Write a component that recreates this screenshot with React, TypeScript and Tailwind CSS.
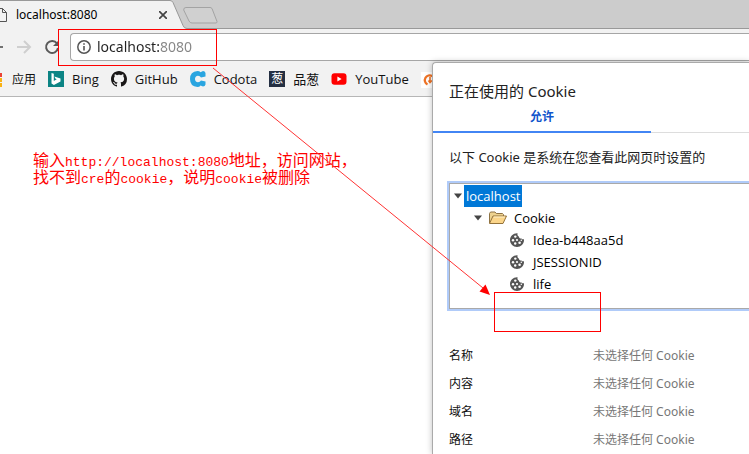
import React from "react";

const uiFont = "font-['Noto_Sans','Noto_Sans_CJK_SC',sans-serif]";

function BingIcon() {
  return (
    <svg className="size-4" viewBox="0 0 16 16" aria-hidden="true">
      <rect width="16" height="16" fill="#0c8484" />
      <path d="M3.5 2 5.8 2.8V10l2.9-1.7-1.4-.7-.9-2.2 6.1 2.1v2.9L5.9 14l-2.4-1.6z" fill="#fff" />
    </svg>
  );
}

function GitHubIcon() {
  return (
    <svg className="size-4" viewBox="0 0 16 16" aria-hidden="true">
      <path
        fill="#191717"
        d="M8 0C3.58 0 0 3.58 0 8c0 3.54 2.29 6.53 5.47 7.59.4.07.55-.17.55-.38 0-.19-.01-.82-.01-1.49-2.01.37-2.53-.49-2.69-.94-.09-.23-.48-.94-.82-1.13-.28-.15-.68-.52-.01-.53.63-.01 1.08.58 1.23.82.72 1.21 1.87.87 2.33.66.07-.52.28-.87.51-1.07-1.78-.2-3.64-.89-3.64-3.95 0-.87.31-1.59.82-2.15-.08-.2-.36-1.02.08-2.12 0 0 .67-.21 2.2.82.64-.18 1.32-.27 2-.27s1.36.09 2 .27c1.53-1.04 2.2-.82 2.2-.82.44 1.1.16 1.92.08 2.12.51.56.82 1.27.82 2.15 0 3.07-1.87 3.75-3.65 3.95.29.25.54.73.54 1.48 0 1.07-.01 1.93-.01 2.2 0 .21.15.46.55.38A8.01 8.01 0 0 0 16 8c0-4.42-3.58-8-8-8z"
      />
    </svg>
  );
}

function CodotaIcon() {
  return (
    <svg className="size-4" viewBox="0 0 16 16" aria-hidden="true">
      <path
        d="M7.500 0Q9.500 0 10.500 1.200L13 0q2 0 2.500 2v3.500L11 6.500Q10 4.800 8 4.800 5 5 5 8t3 3.200q2 0 3-1.700l4.500 1v3q-.5 2-2.500 2l-2.500-1Q9.500 16 7.500 16 0 15.500 0 8T7.500 0z"
        fill="#2aa5e0"
      />
    </svg>
  );
}

function OnionIcon() {
  return (
    <span className="flex size-4 items-center justify-center bg-[#242f42] text-xs leading-4 text-white">葱</span>
  );
}

function YouTubeIcon() {
  return (
    <svg className="size-4" viewBox="0 0 16 16" aria-hidden="true">
      <rect x="0.5" y="2.2" width="15" height="11.6" rx="3" fill="#f00" />
      <path d="M6.4 5.5v5L10.6 8z" fill="#fff" />
    </svg>
  );
}

function OrangeIcon() {
  return (
    <svg className="size-4" viewBox="0 0 16 16" fill="none" aria-hidden="true">
      <rect width="16" height="16" fill="#fff" />
      <path d="M6.500 12.500A4.800 4.800 0 1 1 12.500 11" stroke="#ee7326" strokeWidth="2.2" />
      <path d="M9 5v5M7.500 8.500l1.500 2 2-2" stroke="#ee7326" strokeWidth="1.6" />
    </svg>
  );
}

function CookieIcon() {
  return (
    <svg className="size-4" viewBox="0 0 16 16" aria-hidden="true">
      <path
        fill="#555"
        d="M8 1.200C4.100 1.200 1 4.300 1 8s3.100 7 7 7 7-3.100 7-6.700c0-.4 0-.7-.1-1.100-.9.300-1.900 0-2.400-.8-1.400.2-2.600-.7-2.700-2-1.100-.5-1.700-1.700-1.200-3.200z"
      />
      <g fill="#fff">
        <circle cx="6.300" cy="4.600" r="1.200" />
        <circle cx="4" cy="8.200" r="1.200" />
        <circle cx="8" cy="8" r="1.100" />
        <circle cx="6.200" cy="11.500" r="1.200" />
        <circle cx="10.600" cy="10.800" r="1.300" />
        <circle cx="12.300" cy="8.300" r="0.800" />
      </g>
    </svg>
  );
}

function FolderIcon() {
  return (
    <svg className="h-4 w-5" viewBox="0 0 20 16" aria-hidden="true">
      <path d="M1.500 13V3.500l1-1.500h4.500l1.300 1.500h6.200l1 1V6" fill="#eed28f" stroke="#8e7345" />
      <path d="M1.500 13.500 5 6h13.500L15 13.500z" fill="#fbd58a" stroke="#94733b" strokeLinejoin="round" />
      <path d="M5.700 7h11.200" stroke="#fff1c9" />
    </svg>
  );
}

function Caret() {
  return (
    <svg className="h-2 w-2" viewBox="0 0 8 8" aria-hidden="true">
      <path d="M0 1.500h8L4 6.500z" fill="#444" />
    </svg>
  );
}

const bookmarks = [
  { name: "Bing", icon: <BingIcon /> },
  { name: "GitHub", icon: <GitHubIcon /> },
  { name: "Codota", icon: <CodotaIcon /> },
  { name: "品葱", icon: <OnionIcon /> },
  { name: "YouTube", icon: <YouTubeIcon /> },
];

const cookies = ["Idea-b448aa5d", "JSESSIONID", "life"];
const fields = ["名称", "内容", "域名", "路径"];

function TabStrip() {
  return (
    <div className="flex h-[29px] border-b border-[#999] bg-[#ccc]">
      <div className="relative -mb-px h-[29px] w-[187px]">
        <svg className="absolute inset-0 h-full w-full" viewBox="0 0 187 29" aria-hidden="true">
          <path d="M0 .5H170q2 0 3 2l10 23q1 3 4 3V29H0z" fill="#f2f2f2" />
          <path d="M0 .5H170q2 0 3 2l10 23q1 3 4 3" fill="none" stroke="#999" />
        </svg>
        <div className="relative flex h-[29px] items-center">
          <svg className="mr-2 h-4 w-2" viewBox="0 0 8 16" fill="none" stroke="#555" aria-hidden="true">
            <path d="M0 1.500h2.500l4 4v9H0M2.500 1.500v4h4" />
          </svg>
          <span className="w-[135px] text-xs text-black">localhost:8080</span>
          <button type="button" aria-label="关闭标签页" className="flex size-6 items-center justify-center">
            <svg className="size-2" viewBox="0 0 8 8" stroke="#444" strokeWidth="1.700" aria-hidden="true">
              <path d="M0 0l8 8M8 0 0 8" />
            </svg>
          </button>
        </div>
      </div>
      <button type="button" aria-label="新标签页" className="-ml-1 mt-[7px] h-[17px] w-[35px]">
        <svg className="h-full w-full" viewBox="0 0 35 17" aria-hidden="true">
          <path d="M3 .5h24q1 0 2 1l5 13q0 1.500-1 1.500H9q-2 0-3-2L.7 3Q.5 .5 3 .5z" fill="#d0d0d0" stroke="#a3a3a3" />
        </svg>
      </button>
    </div>
  );
}

function Toolbar() {
  return (
    <div className="flex h-9 items-center">
      <button type="button" aria-label="后退" className="w-4">
        <svg className="h-4 w-1" viewBox="0 0 4 16" aria-hidden="true">
          <path d="M0 8h3" stroke="#5a5a5a" strokeWidth="1.700" />
        </svg>
      </button>
      <button type="button" aria-label="前进" className="mr-3 w-4">
        <svg className="size-4" viewBox="0 0 16 16" fill="none" stroke="#cfcfcf" strokeWidth="2" aria-hidden="true">
          <path d="M1 8h13M8 2l6 6-6 6" />
        </svg>
      </button>
      <button type="button" aria-label="重新加载" className="mr-2.5 w-4">
        <svg className="size-4" viewBox="0 0 16 16" fill="none" stroke="#5a5a5a" strokeWidth="2" aria-hidden="true">
          <path d="M13 4.500A6 6 0 1 0 14 9" />
          <path d="M15 1v6H9z" fill="#5a5a5a" stroke="none" />
        </svg>
      </button>
      <div className="flex h-7 min-w-0 flex-1 items-center rounded-l-sm border border-r-0 border-[#a6a6a6] bg-white pl-1.5">
        <svg className="mr-1.5 size-[14px] shrink-0" viewBox="0 0 14 14" fill="none" stroke="#555" aria-hidden="true">
          <circle cx="7" cy="7" r="6.200" strokeWidth="1.500" />
          <path d="M7 6v4.500M7 3.300v1.500" strokeWidth="1.600" />
        </svg>
        <input
          aria-label="地址"
          defaultValue="localhost:8080"
          className="min-w-0 flex-1 bg-linear-to-r from-[#222] from-[63px] to-[#858585] to-[63px] bg-clip-text text-sm text-transparent outline-none"
        />
      </div>
    </div>
  );
}

function BookmarksBar() {
  return (
    <nav className="flex h-8 items-center gap-3 border-b border-[#b6b6b6] pb-0.5 font-['Open_Sans','Noto_Sans_CJK_SC',sans-serif] text-xs text-[#111]">
      <a href="#apps" className="flex items-center gap-2.5">
        <svg className="h-4 w-0.5" viewBox="0 0 2 16" aria-hidden="true">
          <path d="M0 1h2v4H0z" fill="#ea4335" />
          <path d="M0 6h2v4H0zM0 11h2v4H0z" fill="#f9b214" />
        </svg>
        应用
      </a>
      {bookmarks.map((b) => (
        <a key={b.name} href="#bookmark" className="flex items-center gap-2 text-[13px]">
          {b.icon}
          {b.name}
        </a>
      ))}
      <a href="#bookmark" aria-label="书签">
        <OrangeIcon />
      </a>
    </nav>
  );
}

function CookieDialog() {
  return (
    <section
      role="dialog"
      aria-labelledby="dialog-title"
      className="absolute top-[62px] right-0 bottom-0 left-[432px] rounded-tl-sm border-t border-l border-[#aaa] bg-white shadow-[0_0_6px_rgba(0,0,0,0.25)]"
    >
      <h1 id="dialog-title" className="px-4 pt-4 text-[15px] leading-6 text-[#222]">
        正在使用的 Cookie
      </h1>
      <div role="tablist" className="flex">
        <button
          type="button"
          role="tab"
          aria-selected="true"
          className="h-[30px] w-[218px] border-b-2 border-[#4285f4] text-xs font-bold text-[#1155cc]"
        >
          允许
        </button>
        <div className="flex-1 border-b border-[#ddd]" />
      </div>
      <p className="px-4 pt-3 pb-3.5 text-[13px] leading-6 text-[#222]">以下 Cookie 是系统在您查看此网页时设置的</p>
      <ul
        role="tree"
        aria-label="Cookie"
        className="ml-4 h-[126px] border border-r-0 border-[#a9a9a9] pt-px font-['Open_Sans','Noto_Sans_CJK_SC',sans-serif] text-[13px] leading-[22px] text-black ring-2 ring-[#b0cbf9]"
      >
        <li role="treeitem" aria-selected="true">
          <div className="flex items-center gap-0.5 pl-1">
            <Caret />
            <span className="bg-[#0078d7] px-0.5 text-white">localhost</span>
          </div>
          <ul role="group">
            <li role="treeitem" aria-selected="false">
              <div className="flex items-center gap-1.5 pl-6">
                <Caret />
                <FolderIcon />
                <span>Cookie</span>
              </div>
              <ul role="group">
                {cookies.map((name) => (
                  <li key={name} role="treeitem" aria-selected="false" className="flex items-center gap-2 pl-[59px]">
                    <CookieIcon />
                    {name}
                  </li>
                ))}
              </ul>
            </li>
          </ul>
        </li>
      </ul>
      <dl className="mt-[33px] ml-4 grid grid-cols-[144px_1fr] text-xs leading-7">
        {fields.map((f) => (
          <React.Fragment key={f}>
            <dt className="text-[#111]">{f}</dt>
            <dd className="text-[#777]">未选择任何 Cookie</dd>
          </React.Fragment>
        ))}
      </dl>
    </section>
  );
}

export default function App() {
  return (
    <div className={`relative h-screen overflow-hidden bg-white ${uiFont}`}>
      <header className="bg-[#f2f2f2]">
        <TabStrip />
        <Toolbar />
        <BookmarksBar />
      </header>
      <CookieDialog />
      <p className="absolute top-[154px] left-[33px] font-['Liberation_Mono','Noto_Sans_CJK_SC',monospace] text-base leading-4 whitespace-nowrap text-[#f00]">
        输入<span className="text-[13px]">http://localhost:8080</span>地址，访问网站，
        <br />
        找不到<span className="text-[13px]">cre</span>的<span className="text-[13px]">cookie</span>，说明
        <span className="text-[13px]">cookie</span>被删除
      </p>
      <div className="absolute top-[29px] left-[58px] h-[37px] w-[159px] border border-[#f00]" />
      <div className="absolute top-[292px] left-[494px] h-10 w-[107px] border border-[#f00]" />
      <svg className="pointer-events-none absolute top-0 left-0 h-[454px] w-[749px]" viewBox="0 0 749 454" aria-hidden="true">
        <path d="M213 68 483 288" stroke="#f33" />
        <path d="M490 295 479.500 291.500 485.500 284.500z" fill="#f00" />
      </svg>
    </div>
  );
}
